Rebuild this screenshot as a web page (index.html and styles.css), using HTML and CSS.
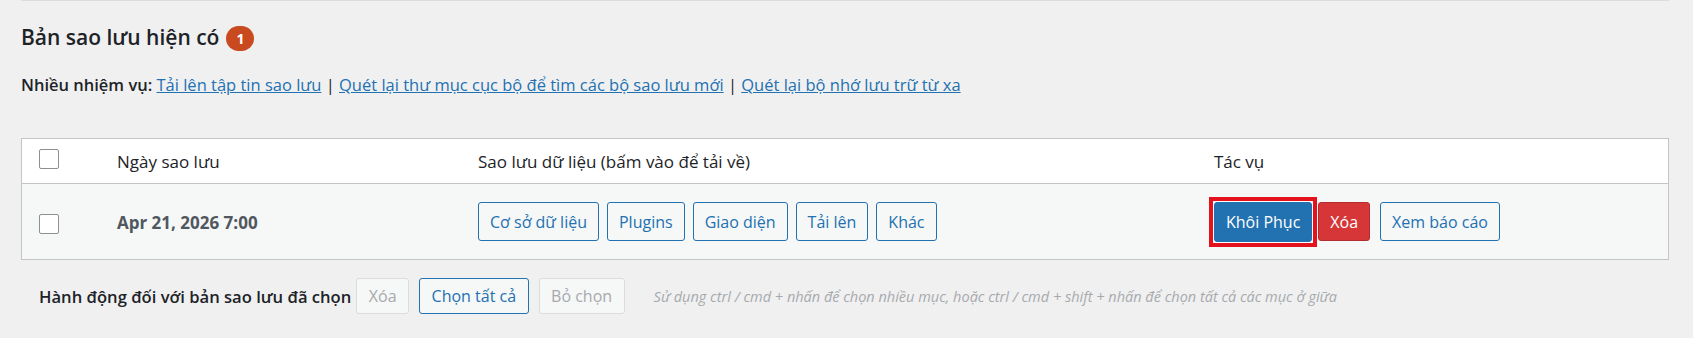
FILE: index.html
```html
<!DOCTYPE html>
<html lang="vi">
<head>
<meta charset="utf-8">
<title>Bản sao lưu hiện có</title>
<link rel="stylesheet" href="styles.css">
</head>
<body>
<div class="wrap">
  <div class="topline"></div>
  <h2 class="title">Bản sao lưu hiện có <span class="badge">1</span></h2>
  <p class="tasks"><strong>Nhiều nhiệm vụ:</strong> <a href="#">Tải lên tập tin sao lưu</a> | <a href="#">Quét lại thư mục cục bộ để tìm các bộ sao lưu mới</a> | <a href="#">Quét lại bộ nhớ lưu trữ từ xa</a></p>

  <div class="table">
    <div class="thead">
      <div class="cell cell-check"><span class="checkbox up"></span></div>
      <div class="cell">Ngày sao lưu</div>
      <div class="cell">Sao lưu dữ liệu (bấm vào để tải về)</div>
      <div class="cell">Tác vụ</div>
    </div>
    <div class="trow">
      <div class="cell cell-check"><span class="checkbox down"></span></div>
      <div class="cell date">Apr 21, 2026 7:00</div>
      <div class="cell buttons">
        <span class="btn">Cơ sở dữ liệu</span>
        <span class="btn">Plugins</span>
        <span class="btn">Giao diện</span>
        <span class="btn">Tải lên</span>
        <span class="btn">Khác</span>
      </div>
      <div class="cell actions">
        <span class="highlight"><span class="btn btn-primary">Khôi Phục</span></span>
        <span class="btn btn-danger">Xóa</span>
        <span class="btn btn-report">Xem báo cáo</span>
      </div>
    </div>
  </div>

  <div class="mass">
    <strong class="mass-label">Hành động đối với bản sao lưu đã chọn</strong>
    <span class="btn btn-small btn-disabled first">Xóa</span>
    <span class="btn btn-small">Chọn tất cả</span>
    <span class="btn btn-small btn-disabled">Bỏ chọn</span>
    <em class="hint">Sử dụng ctrl / cmd + nhấn để chọn nhiều mục, hoặc ctrl / cmd + shift + nhấn để chọn tất cả các mục ở giữa</em>
  </div>
</div>
</body>
</html>
```

FILE: styles.css
```css
html, body {
  margin: 0;
  padding: 0;
  background: #f0f0f1;
}

body {
  font-family: "Open Sans", "Noto Sans", sans-serif;
  color: #1d2327;
}

.wrap {
  padding: 0 24px 0 21px;
}

.topline {
  border-top: 1px solid #dcdcde;
}

.title {
  margin: 22px 0 0;
  display: flex;
  align-items: center;
  gap: 7px;
  font-size: 21px;
  line-height: 29px;
  font-weight: 600;
  color: #1d2327;
}

.badge {
  display: inline-flex;
  align-items: center;
  justify-content: center;
  width: 28px;
  height: 25px;
  border-radius: 13px;
  background: #ca4a1f;
  color: #fff;
  font-size: 14px;
  font-weight: 700;
  line-height: 1;
  margin-top: 2px;
}

.tasks {
  margin: 20px 0 0;
  font-size: 16.5px;
  line-height: 25px;
  color: #1d2327;
}

.tasks strong {
  font-weight: 600;
}

.tasks a {
  color: #2271b1;
  text-decoration: underline;
}

.table {
  margin-top: 41px;
  border: 1px solid #c3c4c7;
  background: #fff;
}

.thead,
.trow {
  display: grid;
  grid-template-columns: 95px 361px 736px 1fr;
  align-items: center;
}

.thead {
  height: 44px;
  border-bottom: 1px solid #c3c4c7;
  background: #fff;
  font-size: 17px;
  line-height: 25px;
}

.trow {
  height: 75px;
  background: #f6f7f7;
}

.cell-check {
  padding-left: 17px;
  display: flex;
  align-items: center;
}

.checkbox {
  display: block;
  width: 20px;
  height: 20px;
  box-sizing: border-box;
  border: 1px solid #8c8f94;
  border-radius: 2px;
  background: #fff;
}

.checkbox.up {
  margin-top: -4px;
}

.checkbox.down {
  margin-top: 5px;
}

.date {
  font-size: 17px;
  font-weight: 700;
  color: #50575e;
  line-height: 25px;
  padding-top: 2px;
}

.buttons,
.actions {
  display: flex;
  align-items: center;
}

.buttons {
  gap: 8px;
}

.btn {
  display: inline-flex;
  align-items: center;
  justify-content: center;
  box-sizing: border-box;
  height: 39px;
  padding: 0 11px;
  border: 1px solid #2271b1;
  border-radius: 3px;
  background: #f6f7f7;
  color: #2271b1;
  font-size: 16px;
  line-height: 1;
  white-space: nowrap;
}

.highlight {
  display: inline-flex;
  margin-left: -5px;
  padding: 1px;
  border: 4px solid #e3121c;
  background: #fff;
}

.btn-primary {
  height: 40px;
  background: #2271b1;
  color: #fff;
}

.btn-danger {
  margin-left: 1px;
  background: #d63638;
  border-color: #b32d2e;
  color: #fff;
}

.btn-report {
  margin-left: 10px;
}

.mass {
  margin-top: 18px;
  padding-left: 18px;
  display: flex;
  align-items: center;
  gap: 10px;
}

.mass-label {
  font-size: 16.6px;
  font-weight: 600;
  color: #1d2327;
  margin-right: -5px;
}

.btn-small {
  height: 36px;
  padding: 0 11.5px;
}

.btn-disabled {
  border-color: #dcdcde;
  color: #a7aaad;
  background: #f6f7f7;
}

.hint {
  margin-left: 19px;
  font-size: 14.5px;
  font-style: italic;
  color: #a7aaad;
}
```
